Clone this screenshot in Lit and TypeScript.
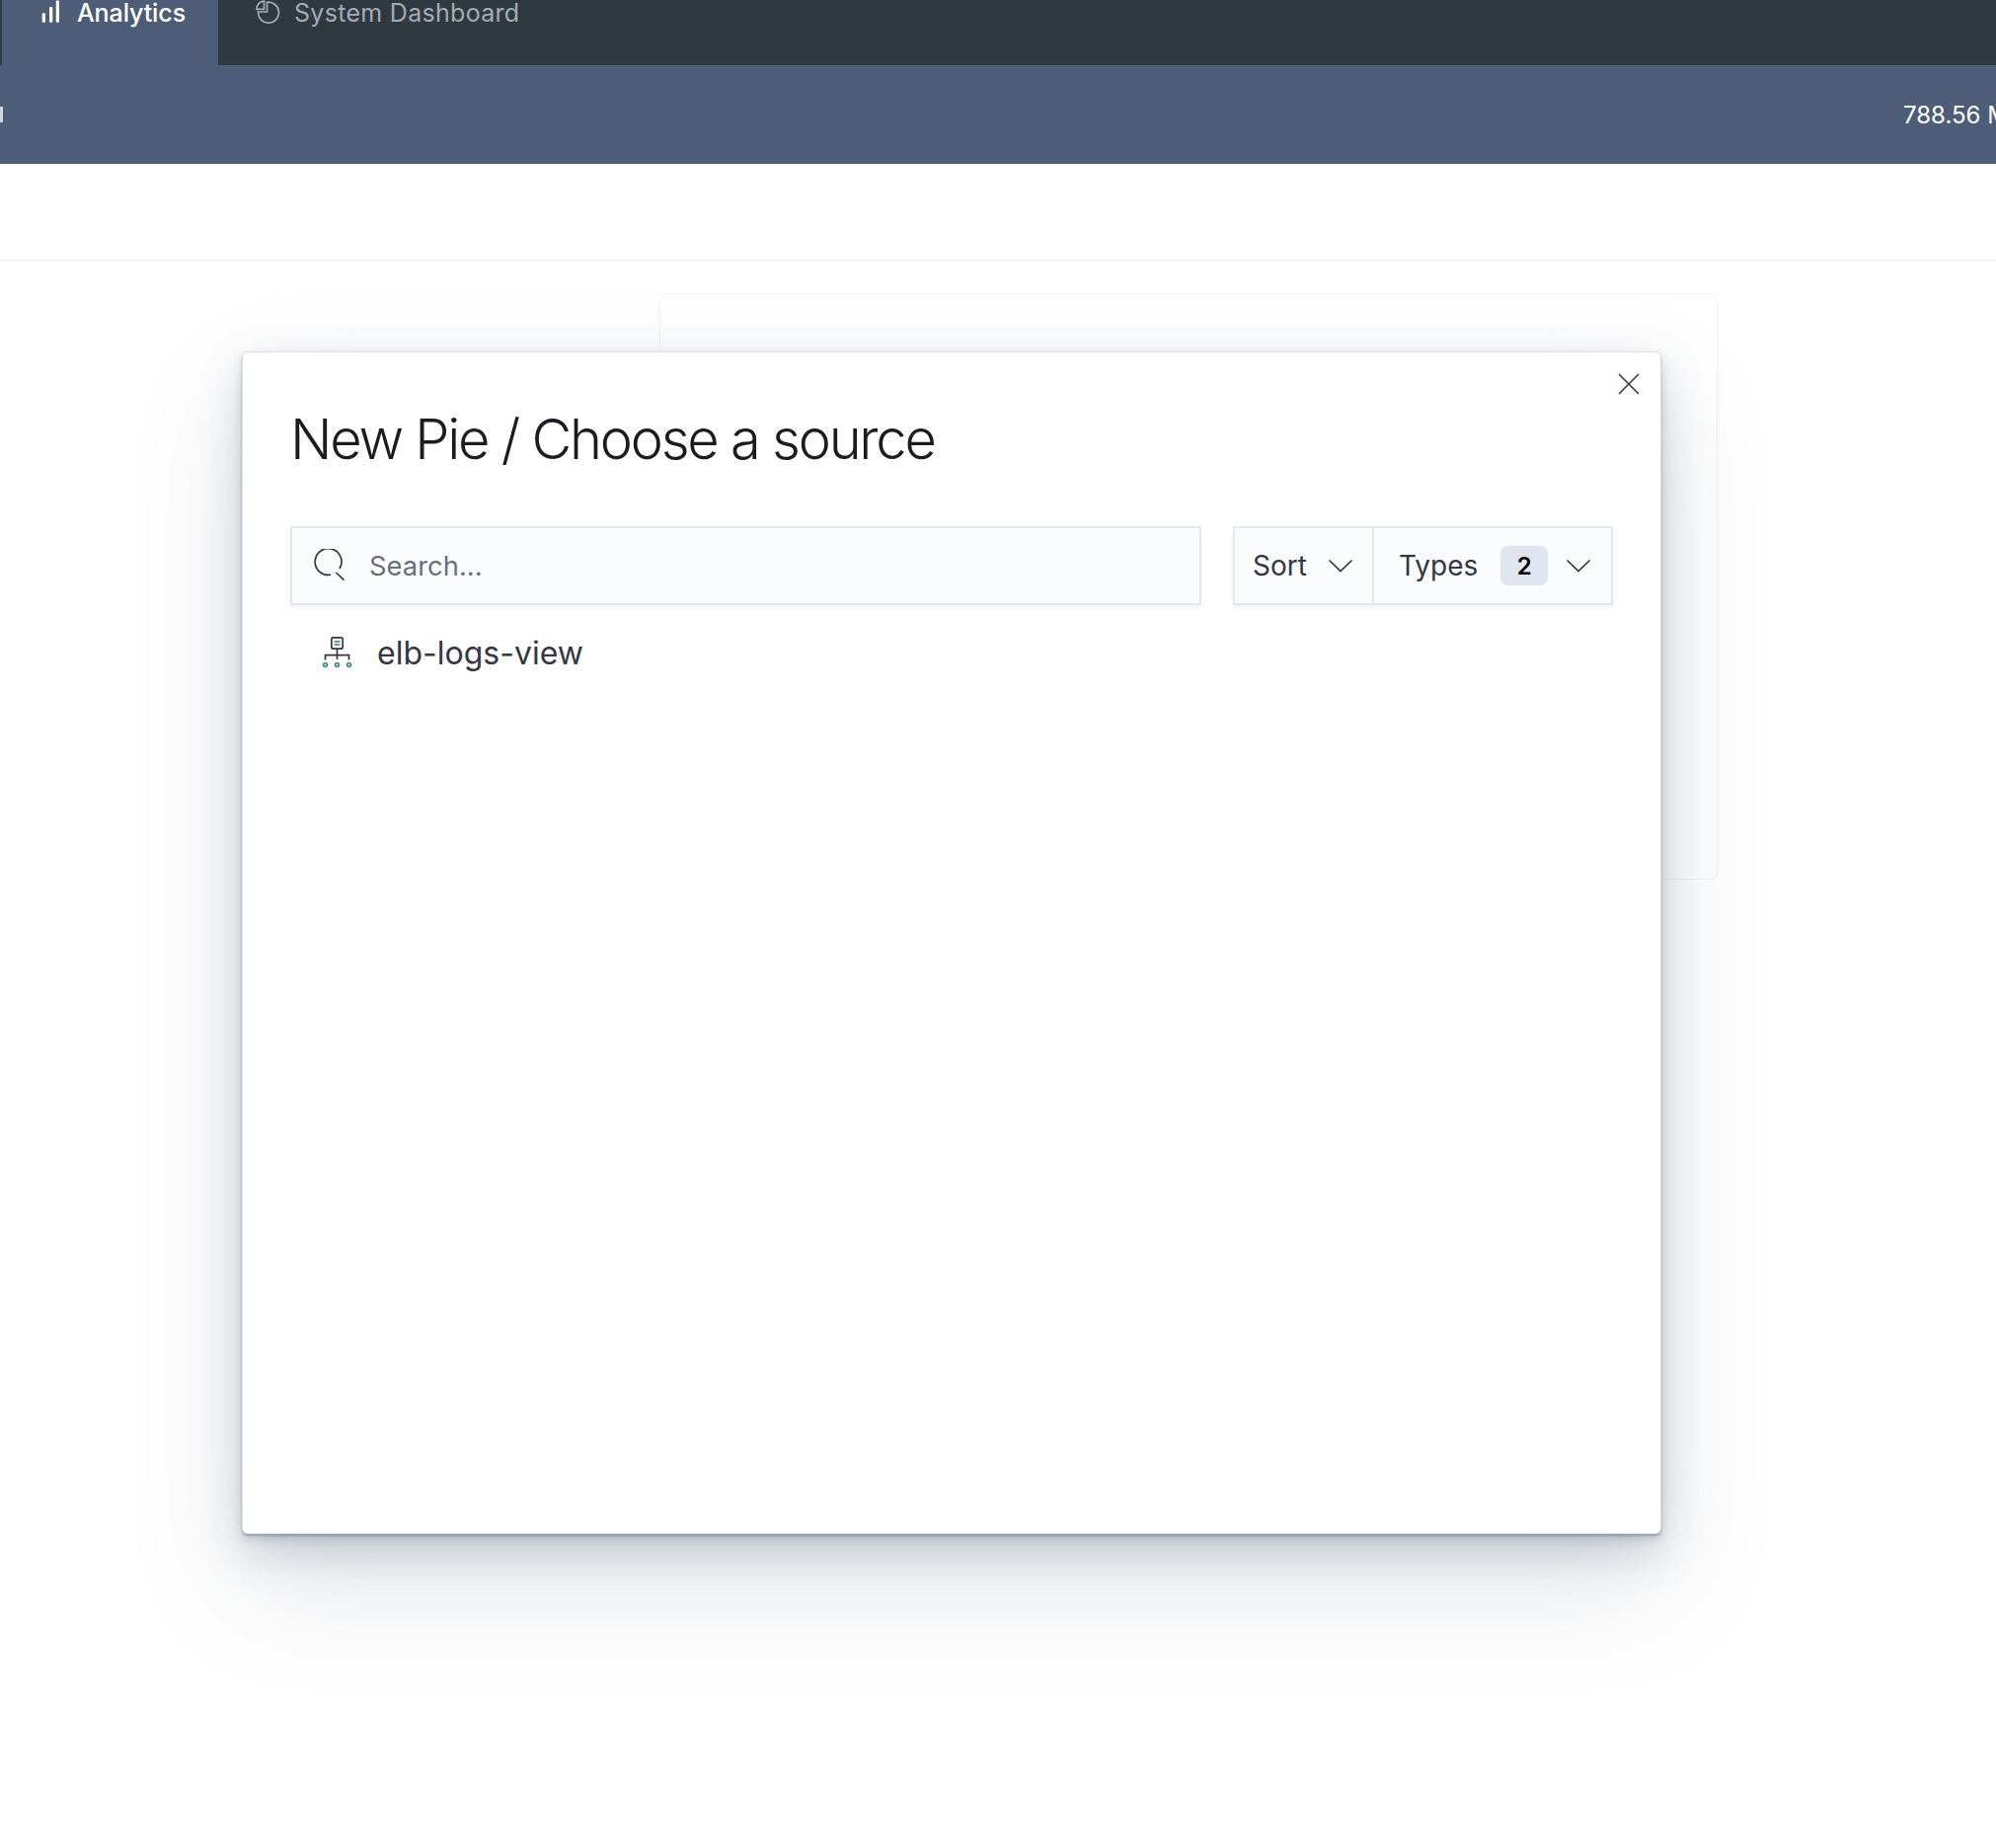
import { LitElement, html, css } from "lit";
import { customElement } from "lit/decorators.js";

@customElement("app-root")
export class AppRoot extends LitElement {
  static styles = css`
    :host { display: block; position: relative; width: 2022px; height: 1872px; overflow: hidden; background: #fff; font-family: Inter, "Liberation Sans", sans-serif; color: #343741; }
    .nav { height: 66px; background: #2f3a40; display: flex; padding-left: 2px; }
    .tab { display: flex; align-items: flex-start; gap: 14px; font-family: Inter, sans-serif; font-size: 25px; letter-spacing: 0.3px; line-height: 26px; color: #a5abb5; padding-left: 38px; width: 300px; box-sizing: border-box; white-space: nowrap; }
    .tab.active { width: 219px; background: #4d5d78; color: #fff; padding-left: 39px; gap: 17px; font-weight: 500; letter-spacing: -0.1px; }
    .sub { height: 100px; background: #4d5d78; display: flex; align-items: center; justify-content: space-between; color: #fff; font-size: 24px; position: relative; overflow: hidden; }
    .frag { width: 3px; height: 16px; background: #d3d6dc; }
    .usage { width: 94px; white-space: nowrap; padding-top: 1px; }
    .head { height: 97px; border-bottom: 1px solid #f1f2f5; box-shadow: 0 1px 2px rgba(75,90,115,.04); }
    .content { padding: 33px 282px 0 668px; }
    .card { height: 594px; box-sizing: border-box; border: 1px solid #f3f4f7; border-radius: 6px; background: #fff; }
    .modal { position: absolute; left: 245px; top: 356px; width: 1438px; height: 1198px; box-sizing: border-box; background: #fff; border: 1px solid #dcdfe6; border-radius: 6px; padding: 0 48px; box-shadow: 0 2px 2px rgba(75,90,115,.35), 0 5px 10px rgba(75,90,115,.2), 0 18px 44px rgba(75,90,115,.24), 0 50px 120px rgba(75,90,115,.16); }
    .close { position: absolute; right: 20px; top: 20px; width: 24px; height: 24px; display: block; }
    h1 { margin: 0; font-weight: 300; font-size: 56px; line-height: 64px; color: #1a1c21; padding-top: 56px; letter-spacing: -2.25px; white-space: nowrap; }
    .controls { display: flex; margin-top: 56px; gap: 32px; }
    .search, .group { height: 80px; box-sizing: border-box; background: #fbfcfd; border: 2px solid #e6e8f0; box-shadow: 0 3px 4px rgba(75,90,115,.08); display: flex; align-items: center; font-size: 28px; }
    .search { width: 923px; padding-left: 22px; color: #69707d; gap: 22px; font-size: 27.4px; }
    .group { width: 385px; }
    .btn { display: flex; align-items: center; height: 100%; box-sizing: border-box; }
    .sort { width: 141px; padding-left: 18px; border-right: 2px solid #e6e8f0; gap: 21px; }
    .types { flex: 1; padding-left: 25px; gap: 23px; }
    .badge { width: 48px; height: 40px; border-radius: 8px; background: #e0e5ee; color: #000; font-size: 24px; font-weight: 600; display: flex; align-items: center; justify-content: center; }
    .chev { margin-left: -5px; display: flex; }
    .row { display: flex; align-items: center; gap: 25px; font-size: 32px; margin-top: 28px; padding-left: 31px; height: 40px; }
    svg { flex: none; }
  `;

  render() {
    return html`
      <div class="nav">
        <div class="tab active">
          <svg width="20" height="23" viewBox="0 0 20 23" fill="#fff"><rect x="1.7" y="13.3" width="3.3" height="9.5" rx="1"/><rect x="9" y="7" width="3.3" height="15.8" rx="1"/><rect x="15.7" y="0.5" width="3.3" height="22.3" rx="1"/></svg>
          <span>Analytics</span>
        </div>
        <div class="tab">
          <svg width="25" height="24" viewBox="0 0 25 24" fill="none" stroke="#a5abb5" stroke-width="1.7"><path d="M11.5 2.3V12H2.5A10.5 10.5 0 1 0 11.5 2.3z"/><path d="M8.5 1V9.3H1A8 8 0 0 1 8.5 1z"/></svg>
          <span>System Dashboard</span>
        </div>
      </div>
      <div class="sub">
        <div class="frag"></div>
        <div class="usage">788.56 MB</div>
      </div>
      <div class="head"></div>
      <div class="content"><div class="card"></div></div>

      <div class="modal">
        <svg class="close" viewBox="0 0 24 24" fill="none" stroke="#343741" stroke-width="1.6"><path d="M2 2l20 20M22 2L2 22"/></svg>
        <h1>New Pie / Choose a source</h1>
        <div class="controls">
          <div class="search">
            <svg width="34" height="34" viewBox="0 0 34 34" fill="none" stroke="#343741" stroke-width="1.7"><path d="M26 20a13.4 13.4 0 1 0-9 6.2"/><path d="M22.5 24l8 7.6"/></svg>
            <span>Search...</span>
          </div>
          <div class="group">
            <div class="btn sort"><span>Sort</span>${this.chev()}</div>
            <div class="btn types"><span>Types</span><span class="badge">2</span><span class="chev">${this.chev()}</span></div>
          </div>
        </div>
        <div class="row">
          <svg width="32" height="34" viewBox="0 0 32 34" fill="none">
            <g stroke="#343741" stroke-width="1.7">
              <rect x="10.8" y="1.8" width="11.4" height="11.4" rx="2"/>
              <path d="M13.5 6h6M13.5 9h6" stroke="#2f7f72"/>
              <path d="M16.5 13v11M4.5 24.5v-4.8h24v4.8"/>
            </g>
            <g stroke="#3f8f82" stroke-width="1.8"><circle cx="4.5" cy="29.5" r="1.9"/><circle cx="16.5" cy="29.5" r="1.9"/><circle cx="28.5" cy="29.5" r="1.9"/></g>
          </svg>
          <span>elb-logs-view</span>
        </div>
      </div>
    `;
  }

  chev() {
    return html`<svg width="26" height="16" viewBox="0 0 26 16" fill="none" stroke="#343741" stroke-width="1.7"><path d="M1.5 2.5L13 13.5 24.5 2.5"/></svg>`;
  }
}
